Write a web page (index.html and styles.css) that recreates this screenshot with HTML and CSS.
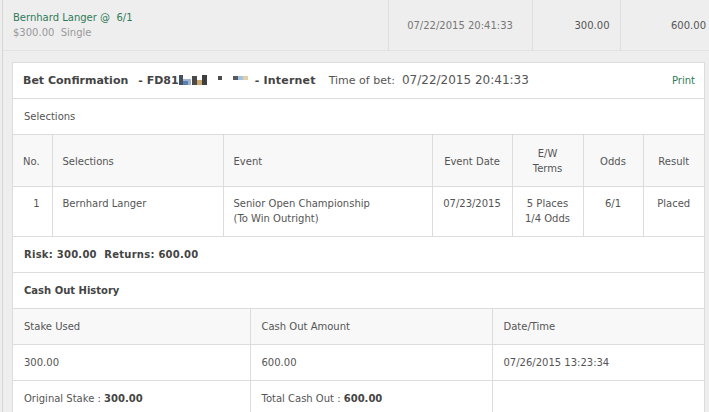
FILE: index.html
```html
<!DOCTYPE html>
<html lang="en">
<head>
    <meta charset="UTF-8">
    <title>Bet Confirmation</title>
    <link rel="stylesheet" href="styles.css">
</head>
<body>
<div class="wrap">
    <table class="bet-row">
        <colgroup>
            <col style="width: 385px">
            <col style="width: 144px">
            <col style="width: 88px">
            <col>
        </colgroup>
        <tr>
            <td class="bet-name">
                <a href="#" class="green">Bernhard Langer @&nbsp; 6/1</a>
                <div class="muted">$300.00&nbsp; Single</div>
            </td>
            <td class="center date">07/22/2015 20:41:33</td>
            <td class="right">300.00</td>
            <td class="right last">600.00</td>
        </tr>
    </table>

    <div class="detail">
        <div class="panel">
            <div class="panel-head">
                <span class="strong">Bet Confirmation</span>
                <span class="strong ref">- FD81</span><svg class="masked" width="70" height="11" viewBox="0 0 70 11">
                    <rect x="0" y="0" width="4" height="10" fill="#48505c"/>
                    <rect x="4" y="4" width="8" height="6" fill="#9fb5cf"/>
                    <rect x="4" y="6" width="5" height="4" fill="#5a7fae"/>
                    <rect x="13" y="1" width="5" height="9" fill="#4a4a4a"/>
                    <rect x="18" y="5" width="5" height="5" fill="#c9a76e"/>
                    <rect x="23" y="0" width="5" height="10" fill="#3f3f3f"/>
                    <rect x="39" y="1" width="4" height="4" fill="#4d4d4d"/>
                    <rect x="54" y="1" width="5" height="4" fill="#5a5a5a"/>
                    <rect x="59" y="1" width="5" height="4" fill="#9cc3ea"/>
                    <rect x="64" y="1" width="5" height="4" fill="#e2cfa8"/>
                </svg>
                <span class="strong channel">- Internet</span>
                <span class="time-label">Time of bet:</span>
                <span class="time">07/22/2015 20:41:33</span>
                <a href="#" class="green print">Print</a>
            </div>

            <div class="sect">Selections</div>

            <table class="grid sel">
                <colgroup>
                    <col style="width: 39px">
                    <col style="width: 171px">
                    <col style="width: 209px">
                    <col style="width: 80px">
                    <col style="width: 71px">
                    <col style="width: 60px">
                    <col style="width: 61px">
                </colgroup>
                <tr class="head">
                    <th class="right">No.</th>
                    <th>Selections</th>
                    <th>Event</th>
                    <th class="center">Event Date</th>
                    <th class="center">E/W<br>Terms</th>
                    <th class="center">Odds</th>
                    <th class="center">Result</th>
                </tr>
                <tr>
                    <td class="right">1</td>
                    <td>Bernhard Langer</td>
                    <td>Senior Open Championship<br>(To Win Outright)</td>
                    <td class="center">07/23/2015</td>
                    <td class="center">5 Places<br>1/4 Odds</td>
                    <td class="center">6/1</td>
                    <td class="center">Placed</td>
                </tr>
            </table>

            <div class="sect strong totals">Risk: 300.00&nbsp; Returns: 600.00</div>
            <div class="sect strong">Cash Out History</div>

            <table class="grid cash">
                <colgroup>
                    <col style="width: 237px">
                    <col style="width: 242px">
                    <col style="width: 212px">
                </colgroup>
                <tr class="head">
                    <th>Stake Used</th>
                    <th>Cash Out Amount</th>
                    <th>Date/Time</th>
                </tr>
                <tr>
                    <td>300.00</td>
                    <td>600.00</td>
                    <td>07/26/2015 13:23:34</td>
                </tr>
                <tr>
                    <td>Original Stake : <b>300.00</b></td>
                    <td>Total Cash Out : <b>600.00</b></td>
                    <td></td>
                </tr>
            </table>
        </div>
    </div>
</div>
</body>
</html>
```

FILE: styles.css
```css
body {
    margin: 0;
    font-family: "DejaVu Sans", Verdana, sans-serif;
    font-size: 10px;
    color: #555;
    background-color: #eee;
}

.wrap {
    margin-left: 2px;
    border-left: 1px solid #d6d6d6;
    background-color: #eee;
    height: 412px;
    overflow: hidden;
}

a {
    text-decoration: none;
}

.green {
    color: #2f7a58;
}

.muted {
    color: #999;
}

.strong {
    font-weight: bold;
    color: #444;
}

.center {
    text-align: center;
}

.right {
    text-align: right;
}

/* summary row above the detail panel */
.bet-row {
    width: 100%;
    table-layout: fixed;
    border-collapse: collapse;
    border-bottom: 1px solid #e2e2e2;
}

.bet-row td {
    padding: 10px 10px;
    line-height: 15px;
    height: 30px;
    vertical-align: middle;
    border-left: 1px solid #e0e0e0;
}

.bet-row td.bet-name {
    border-left: none;
}

.bet-row td.date {
    color: #777;
}

.bet-row td.last {
    padding-right: 3px;
}

.detail {
    padding: 11px 4px 0 9px;
}

.panel {
    background-color: white;
    border: 1px solid #dcdcdc;
}

.panel-head {
    display: flex;
    align-items: center;
    padding: 10px 9px 10px 10px;
    line-height: 15px;
    font-size: 11px;
    border-bottom: 1px solid #dcdcdc;
}

.panel-head .ref {
    margin-left: 10px;
}

.masked {
    margin-top: -1px;
}

.panel-head .channel {
    margin-left: 6px;
    letter-spacing: 0.2px;
}

.panel-head .time-label {
    margin-left: 13px;
    color: #555;
}

.panel-head .time {
    margin-left: 7px;
    font-size: 12px;
    color: #555;
}

.panel-head .print {
    margin-left: auto;
    font-size: 10px;
}

.sect {
    padding: 10px 11px;
    line-height: 15px;
    border-bottom: 1px solid #dcdcdc;
}

.sect.totals {
    letter-spacing: 0.25px;
}

.grid {
    width: 100%;
    table-layout: fixed;
    border-collapse: collapse;
}

.grid th,
.grid td {
    font-weight: normal;
    text-align: left;
    line-height: 15px;
    padding: 10px 10px 10px 10px;
    border-left: 1px solid #dcdcdc;
    border-bottom: 1px solid #dcdcdc;
}

.grid th:first-child,
.grid td:first-child {
    border-left: none;
}

.grid .head {
    background-color: #f8f8f8;
}

.grid .head th.center,
.grid td.center {
    text-align: center;
}

.grid .head th.right,
.grid td.right {
    text-align: right;
    padding-right: 12px;
}

.sel th {
    padding-top: 11px;
    padding-bottom: 10px;
    vertical-align: middle;
}

.sel td {
    padding-top: 9px;
    vertical-align: top;
}

.cash th,
.cash td {
    padding-left: 11px;
}

.cash b {
    color: #444;
}
```
